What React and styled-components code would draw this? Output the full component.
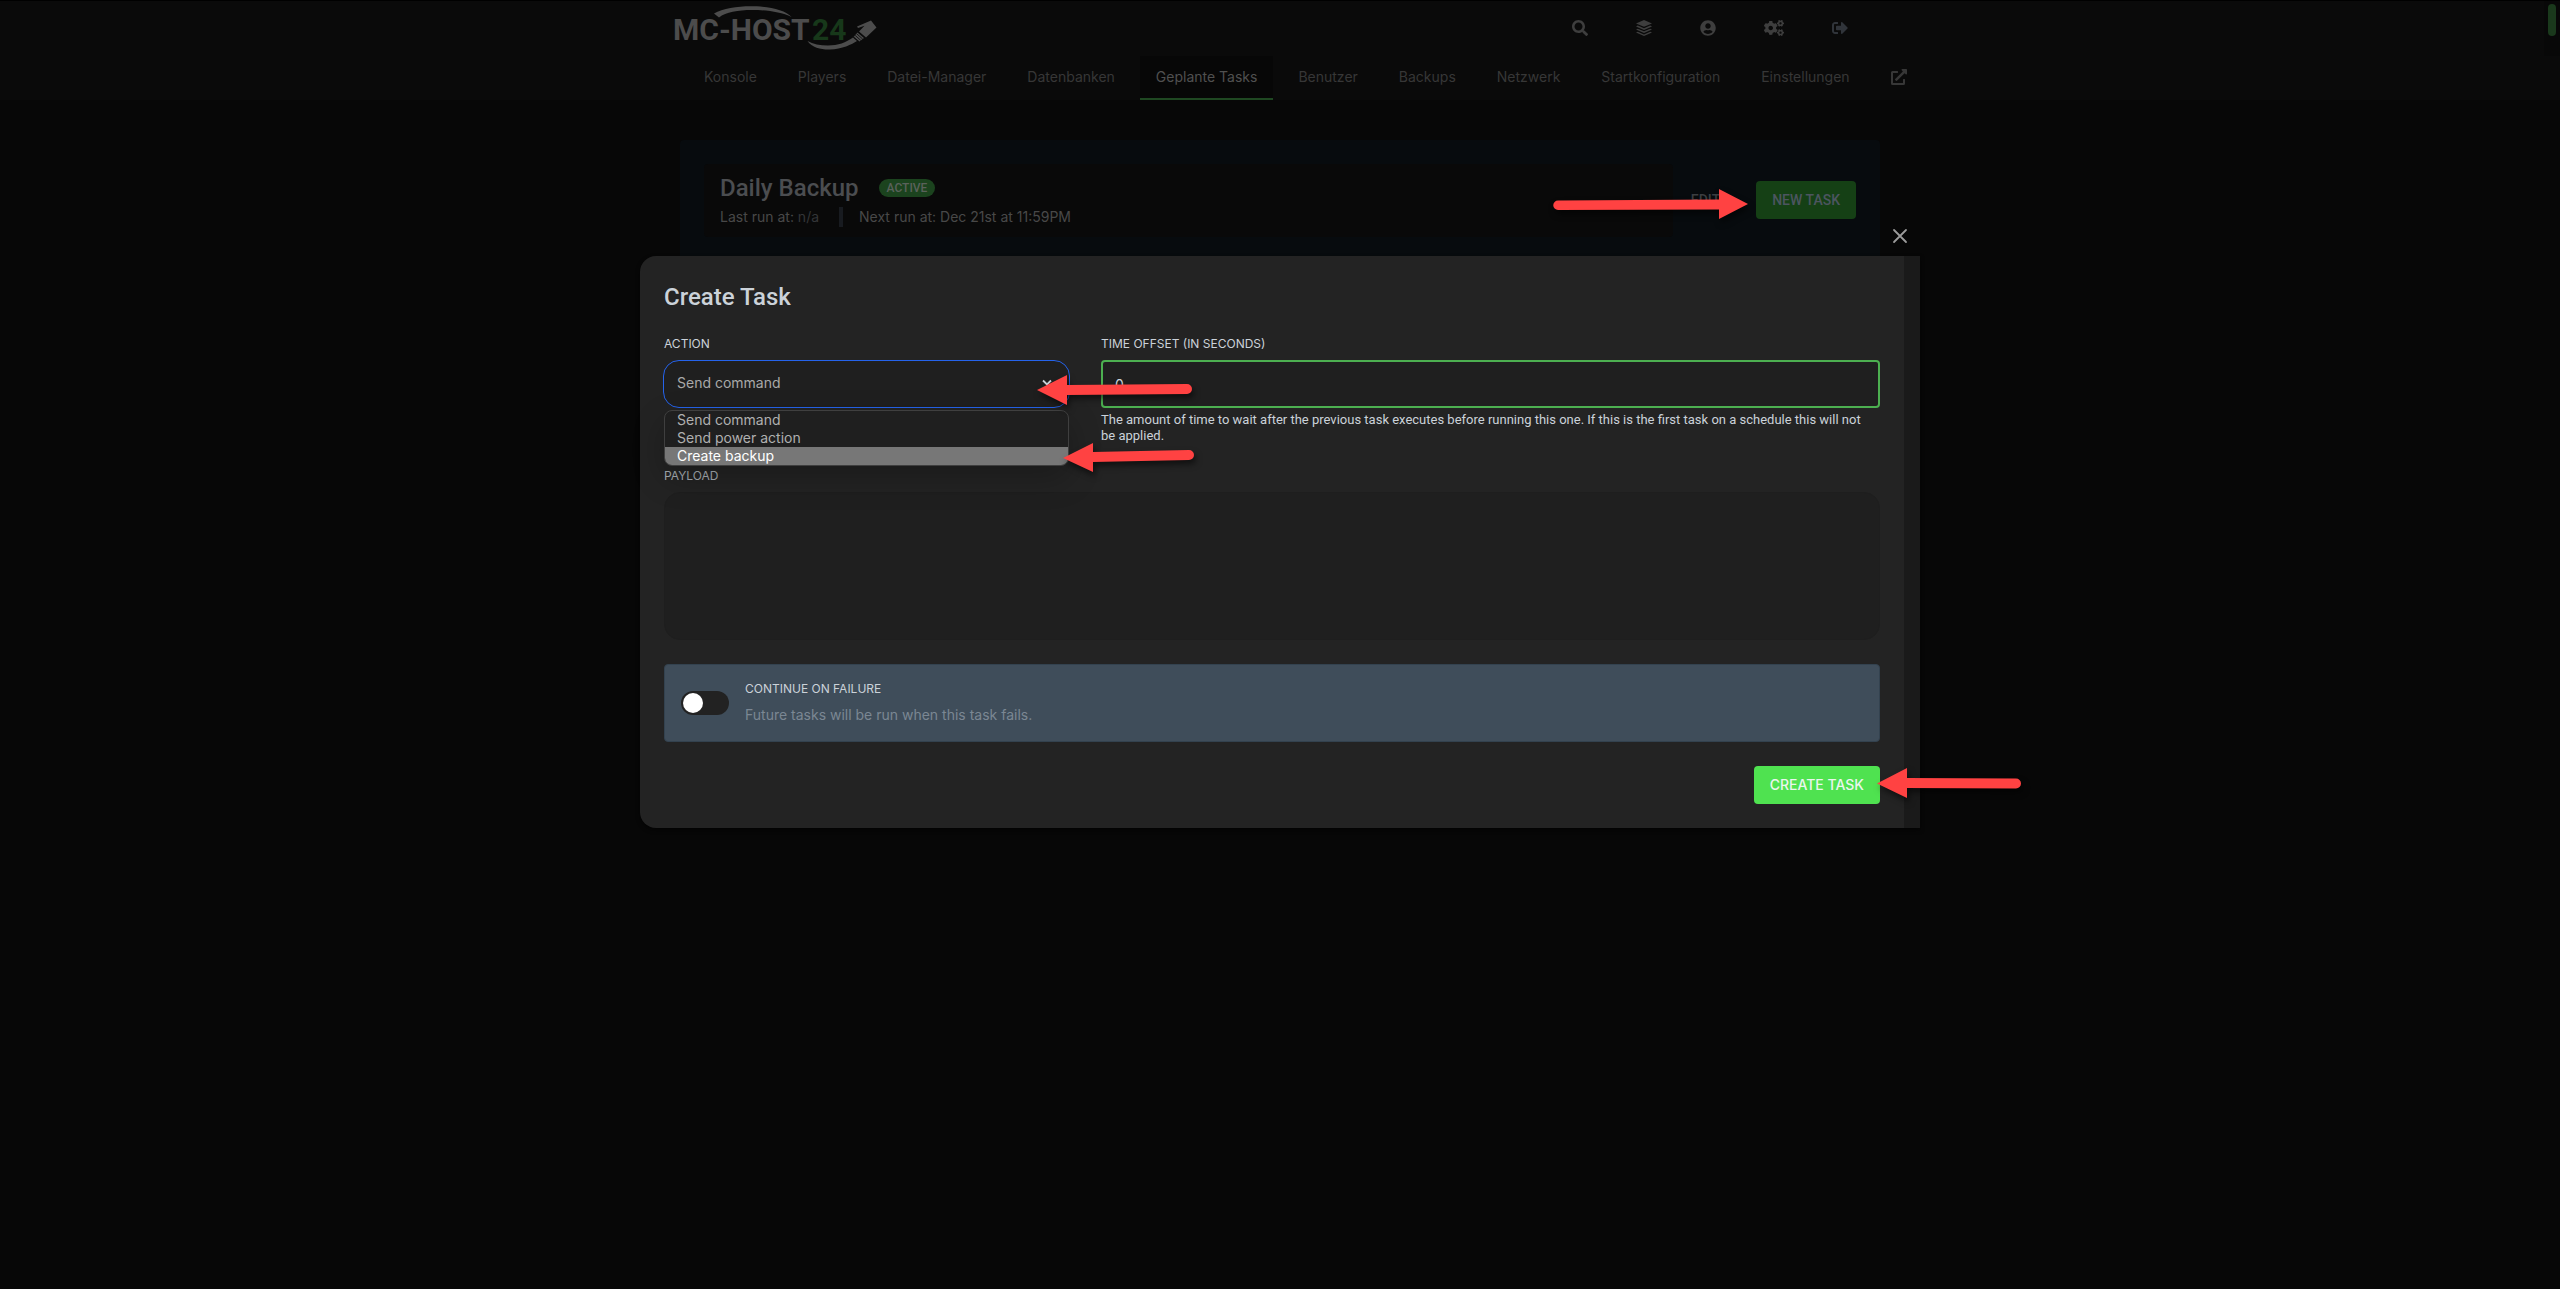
import React from "react";
import styled, { createGlobalStyle, css } from "styled-components";
import { FaSearch, FaUserCircle, FaCogs, FaSignOutAlt, FaExternalLinkAlt } from "react-icons/fa";

const sans = '"Inter", "Roboto", sans-serif';
const heading = '"Roboto", "Inter", sans-serif';

const GlobalStyle = createGlobalStyle`
  *, *::before, *::after { box-sizing: border-box; }
  html { background: #070707; }
  body {
    margin: 0;
    color: #4a4a4a;
    font: 400 14px/20px ${sans};
  }
  h1, h2, p { margin: 0; }
  button, input, select, textarea { font: inherit; }
`;

const Page = styled.div`
  position: relative;
  min-height: 100vh;
  overflow: hidden;
  border-top: 1px solid #000;
`;

const Header = styled.header`
  background: #0a0a0a;
  padding-right: 16px;
`;

const Container = styled.div`
  width: 100%;
  max-width: 1200px;
  margin: 0 auto;
`;

const TopBar = styled(Container)`
  display: flex;
  justify-content: space-between;
  align-items: flex-start;
  height: 55px;
`;

const LogoLink = styled.a`
  display: block;
  height: 52px;
`;

const IconLinks = styled.nav`
  display: flex;
  padding-top: 3px;
`;

const IconLink = styled.a`
  display: flex;
  padding: 16px 24px;
  color: ${(p) => (p.$cool ? "#30343a" : "#3e3e3e")};
  svg {
    flex: none;
    width: ${(p) => (p.$wide ? 20 : 16)}px;
    height: 16px;
  }
`;

const SubNav = styled(Container)`
  display: flex;
  height: 44px;
  padding: 0 7px;
`;

const SubLink = styled.a`
  display: flex;
  flex: none;
  align-items: center;
  margin-left: 9px;
  padding: 0 16px;
  color: #373737;
  text-decoration: none;
  border-bottom: 2px solid transparent;
  svg {
    width: 16px;
    height: 16px;
  }
  ${(p) =>
    p.$active &&
    css`
      color: #505050;
      background: #070707;
      border-color: #1f4822;
    `}
`;

const Track = styled.div`
  position: absolute;
  top: 0;
  right: 0;
  width: 16px;
  height: 55px;
  padding: 3px 4px;
  background: #080808;
`;

const Thumb = styled.div`
  height: 32px;
  border-radius: 4px;
  background: #1a391c;
`;

const Schedule = styled.section`
  display: flex;
  align-items: center;
  width: 100%;
  max-width: 1200px;
  height: 140px;
  margin: 40px auto 0;
  padding: 0 24px 20px;
  border-radius: 4px 4px 0 0;
  background: #070b0e;
`;

const ScheduleInfo = styled.div`
  flex: 1;
  display: flex;
  flex-direction: column;
  gap: 5px;
  margin-right: 2px;
  padding: 10px 16px;
  border-radius: 4px;
  background: #090909;
`;

const TitleRow = styled.div`
  display: flex;
  align-items: center;
  gap: 20px;
`;

const ScheduleTitle = styled.h1`
  font: 500 24px/28px ${heading};
  color: #4b4d50;
`;

const Badge = styled.span`
  padding: 0 8px;
  border-radius: 9px;
  background: #1b431e;
  color: #5a615b;
  font: 500 12px/18px ${heading};
`;

const Runs = styled.div`
  display: flex;
  color: #484848;
`;

const LastRun = styled.p`
  padding-right: 20px;
  border-right: 4px solid #181b20;
`;

const Muted = styled.span`
  color: #333537;
`;

const NextRun = styled.p`
  padding-left: 16px;
`;

const ScheduleActions = styled.div`
  display: flex;
  gap: 20px;
`;

const Button = styled.button`
  border: 0;
  border-radius: 4px;
  padding: 9px 16px;
  font: 500 14px/20px ${heading};
  text-transform: uppercase;
  color: #3b3e41;
  background: none;
  ${(p) => p.$kind === "dim" && css`background: #154015; color: #4c5560;`}
  ${(p) => p.$kind === "primary" && css`background: #4fe250; color: #eaf6ee; font-family: ${sans};`}
`;

const Dialog = styled.section`
  position: absolute;
  top: 255px;
  left: 50%;
  width: 50%;
  transform: translateX(-50%);
  padding: 27px 24px 24px;
  border-radius: 16px 0 0 16px;
  background: #232323;
  border-right: 16px solid #1a1a1a;
  box-shadow: 0 2px 4px rgba(0, 0, 0, 0.6);
`;

const CloseButton = styled.button`
  position: absolute;
  top: -32px;
  right: -8px;
  display: flex;
  padding: 4px;
  border: 0;
  background: none;
  color: #9b9b9b;
`;

const DialogTitle = styled.h2`
  margin-bottom: 25px;
  font: 500 24px/28px ${heading};
  color: #cbd2d9;
`;

const Form = styled.form`
  display: flex;
  flex-direction: column;
`;

const Fields = styled.div`
  display: grid;
  grid-template-columns: 405px 1fr;
  gap: 32px;
  height: 132px;
`;

const Field = styled.div`
  position: relative;
  display: flex;
  flex-direction: column;
`;

const Label = styled.label`
  margin-bottom: 8px;
  color: ${(p) => (p.$dim ? "#a6acb2" : "#cbd2d9")};
  font-size: 12px;
  line-height: 16px;
  text-transform: uppercase;
`;

const SelectBox = styled.div`
  position: relative;
  margin: 0 -1px;
`;

const Select = styled.select`
  appearance: none;
  display: block;
  width: 100%;
  height: 48px;
  padding: 0 13px 2px;
  border: 1px solid #2563eb;
  border-radius: 16px;
  background: #1f1f1f;
  color: #a9a9a9;
  outline: none;
`;

const Chevron = styled.svg`
  position: absolute;
  top: 19px;
  right: 18px;
  pointer-events: none;
`;

const Menu = styled.ul`
  position: absolute;
  top: 74px;
  left: 0;
  right: 0;
  z-index: 1;
  margin: 0;
  padding: 0;
  overflow: hidden;
  list-style: none;
  border: 1px solid #3f3f3f;
  border-radius: 8px;
  background: #1f1f1f;
  box-shadow: 0 12px 32px rgba(0, 0, 0, 0.24);
`;

const Option = styled.li`
  padding: 0 12px;
  line-height: 18px;
  color: ${(p) => (p.$on ? "#ffffff" : "#b0b0b0")};
  background: ${(p) => (p.$on ? "#777777" : "transparent")};
`;

const NumberInput = styled.input`
  width: 100%;
  height: 48px;
  padding: 0 12px;
  border: 2px solid #4caf50;
  border-radius: 4px;
  background: #1f1f1f;
  color: #cbd2d9;
  outline: none;
`;

const Help = styled.p`
  margin-top: 4px;
  padding-right: 8px;
  color: #cbd2d9;
  font: 400 13px/16px ${heading};
`;

const Payload = styled.textarea`
  height: 148px;
  padding: 12px;
  border: 1px solid #1e1e1e;
  border-radius: 16px;
  background: #1f1f1f;
  color: #cbd2d9;
  resize: none;
  outline: none;
`;

const Failure = styled.div`
  display: flex;
  align-items: center;
  gap: 16px;
  margin: 24px 0;
  height: 78px;
  padding: 0 16px;
  border: 1px solid #33424f;
  border-radius: 4px;
  background: #3f4d5a;
`;

const Switch = styled.input`
  appearance: none;
  flex: none;
  width: 48px;
  height: 24px;
  margin: 0;
  padding: 2px;
  border-radius: 12px;
  background: #222222;
  &::before {
    content: "";
    display: block;
    width: 20px;
    height: 20px;
    border-radius: 50%;
    background: #ffffff;
  }
  &:checked::before { margin-left: 24px; }
`;

const FailureText = styled.div`
  display: flex;
  flex-direction: column;
`;

const Hint = styled.p`
  color: #7b8793;
`;

const Actions = styled.div`
  display: flex;
  justify-content: flex-end;
`;

const Arrow = styled.svg`
  position: absolute;
  left: calc(50% + ${(p) => p.$x}px);
  top: ${(p) => p.$y}px;
  z-index: 2;
  overflow: visible;
  pointer-events: none;
  filter: drop-shadow(2px 4px 3px rgba(0, 0, 0, 0.55));
`;

function Logo() {
  return (
    <svg width="208" height="51" viewBox="672 1 208 51" role="img" aria-label="MC-HOST24">
      <g fontFamily="Roboto, sans-serif" fontWeight="700" fontSize="30">
        <text x="673" y="40" fill="#4c4c4c">MC-HOST</text>
        <text x="812" y="40" fill="#17381a">24</text>
      </g>
      <g fill="#4c4c4c">
        <path d="M714 13.5C724 7.5 742 5.5 757 6.3C772 7.2 786 10.5 791.5 17C781 12 766 10 752 10C738 10 726 12 719 17.5Z" />
        <path d="M807.5 41C812 48 822 49.8 830 49.5C842 49 852 44.5 857 41L853 37.5C846 42.5 838 45.5 828 45.5C820 45.5 813 44 807.5 41Z" />
        <path d="M857.5 32.5L864 38L859.5 41.5L853.5 37Z" />
        <path d="M871 20.5L876.5 27.5L866 37.5L859 31.5L864.5 25.8L858 28L857 26.5Z" />
      </g>
      <path
        stroke="#0a0a0a"
        strokeWidth="0.8"
        d="M858.6 32.3L864.6 37.6M856.8 33.9L862.6 39M855.2 35.4L860.8 40.4M853.6 36.9L859 41.8"
      />
    </svg>
  );
}

function LayersIcon() {
  return (
    <svg viewBox="0 0 16 16" fill="currentColor">
      <path d="M8 0L16 3.4L8 6.8L0 3.4Z" />
      <path d="M0 6.4L1.8 5.6L8 8.2L14.2 5.6L16 6.4L8 9.9Z" />
      <path d="M0 9.5L1.8 8.7L8 11.3L14.2 8.7L16 9.5L8 13Z" />
      <path d="M0 12.6L1.8 11.8L8 14.4L14.2 11.8L16 12.6L8 16Z" />
    </svg>
  );
}

const topIcons = [
  ["Search", FaSearch],
  ["Servers", LayersIcon],
  ["Account", FaUserCircle],
  ["Admin", FaCogs],
  ["Sign out", FaSignOutAlt],
];

const pages = [
  "Konsole",
  "Players",
  "Datei-Manager",
  "Datenbanken",
  "Geplante Tasks",
  "Benutzer",
  "Backups",
  "Netzwerk",
  "Startkonfiguration",
  "Einstellungen",
];

const actions = ["Send command", "Send power action", "Create backup"];

const arrows = [
  { x: 273, y: 188, w: 196, d: "M5 11.5L166 10.5V0L195 15L166 30V20.5L5 21A4.7 4.7 0 0 1 5 11.5Z" },
  { x: -243, y: 374, w: 156, d: "M150 9L30 10V0L0 15L30 30V20L150 19A5 5 0 0 0 150 9Z" },
  { x: -217, y: 441, w: 132, d: "M126 8L30 10V1L0 16L30 30V20L126 18A5 5 0 0 0 126 8Z" },
  { x: 597, y: 767, w: 144, d: "M139 10.5L30 10V0L0 15.5L30 30V20L139 20.5A5 5 0 0 0 139 10.5Z" },
];

export default function App() {
  return (
    <Page>
      <GlobalStyle />
      <Header>
        <TopBar>
          <LogoLink href="#" aria-label="MC-HOST24">
            <Logo />
          </LogoLink>
          <IconLinks>
            {topIcons.map(([name, Icon]) => (
              <IconLink
                key={name}
                href="#"
                aria-label={name}
                $cool={name === "Sign out"}
                $wide={name === "Admin"}
              >
                <Icon />
              </IconLink>
            ))}
          </IconLinks>
        </TopBar>
        <SubNav as="nav">
          {pages.map((page) => (
            <SubLink key={page} href="#" $active={page === "Geplante Tasks"}>
              {page}
            </SubLink>
          ))}
          <SubLink href="#" aria-label="External">
            <FaExternalLinkAlt />
          </SubLink>
        </SubNav>
      </Header>
      <Track>
        <Thumb />
      </Track>

      <Schedule>
        <ScheduleInfo>
          <TitleRow>
            <ScheduleTitle>Daily Backup</ScheduleTitle>
            <Badge>ACTIVE</Badge>
          </TitleRow>
          <Runs>
            <LastRun>
              Last run at: <Muted>n/a</Muted>
            </LastRun>
            <NextRun>Next run at: Dec 21st at 11:59PM</NextRun>
          </Runs>
        </ScheduleInfo>
        <ScheduleActions>
          <Button type="button">Edit</Button>
          <Button type="button" $kind="dim">
            New Task
          </Button>
        </ScheduleActions>
      </Schedule>

      <Dialog role="dialog" aria-labelledby="dialog-title">
        <CloseButton type="button" aria-label="Close">
          <svg width="16" height="16" viewBox="0 0 16 16" stroke="currentColor" strokeWidth="1.8" strokeLinecap="round">
            <path d="M2 2L14 14M14 2L2 14" />
          </svg>
        </CloseButton>
        <DialogTitle id="dialog-title">Create Task</DialogTitle>
        <Form>
          <Fields>
            <Field>
              <Label htmlFor="action">Action</Label>
              <SelectBox>
                <Select id="action" defaultValue={actions[0]}>
                  {actions.map((a) => (
                    <option key={a}>{a}</option>
                  ))}
                </Select>
                <Chevron width="10" height="8" viewBox="0 0 10 8" fill="none" stroke="#cbd2d9" strokeWidth="1.8">
                  <path d="M1 1.5L5 5.5L9 1.5" />
                </Chevron>
              </SelectBox>
              <Menu>
                {actions.map((a) => (
                  <Option key={a} $on={a === "Create backup"}>
                    {a}
                  </Option>
                ))}
              </Menu>
            </Field>
            <Field>
              <Label htmlFor="offset">Time offset (in seconds)</Label>
              <NumberInput id="offset" defaultValue="0" />
              <Help>
                The amount of time to wait after the previous task executes before running this one. If this is the
                first task on a schedule this will not be applied.
              </Help>
            </Field>
          </Fields>
          <Label htmlFor="payload" $dim>
            Payload
          </Label>
          <Payload id="payload" />
          <Failure>
            <Switch type="checkbox" id="continue" />
            <FailureText>
              <Label htmlFor="continue">Continue on failure</Label>
              <Hint>Future tasks will be run when this task fails.</Hint>
            </FailureText>
          </Failure>
          <Actions>
            <Button type="submit" $kind="primary">
              Create Task
            </Button>
          </Actions>
        </Form>
      </Dialog>

      {arrows.map((a) => (
        <Arrow key={a.x} $x={a.x} $y={a.y} width={a.w} height="32" fill="#ff4242" aria-hidden="true">
          <path d={a.d} />
        </Arrow>
      ))}
    </Page>
  );
}
